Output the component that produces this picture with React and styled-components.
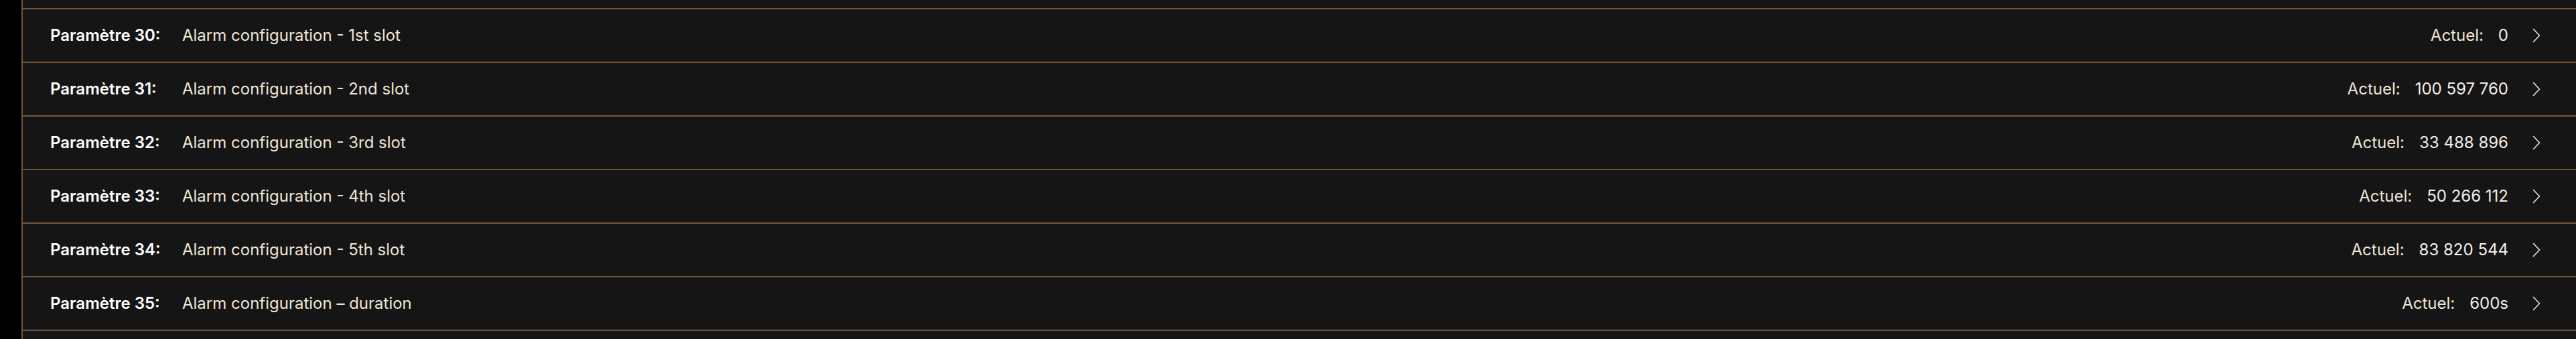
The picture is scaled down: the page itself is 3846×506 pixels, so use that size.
import React from "react"
import styled, { createGlobalStyle } from "styled-components"

const GlobalStyle = createGlobalStyle`
  html, body {
    margin: 0;
    padding: 0;
    background: #000;
    overflow: hidden;
  }
  body {
    font-family: Inter, "Noto Sans", sans-serif;
    -webkit-font-smoothing: antialiased;
  }
`

const Page = styled.div`
  display: flex;
  height: 506px;
  overflow: hidden;
  background: #000;
`

const Gutter = styled.div`
  width: 32px;
  flex-shrink: 0;
  background: #000;
`

const Panel = styled.div`
  flex: 1;
  display: flex;
  flex-direction: column;
  background: #151515;
  border-left: 2px solid #715639;
`

const Stub = styled.div`
  height: ${(p) => p.h}px;
  flex-shrink: 0;
  box-sizing: border-box;
  border-bottom: ${(p) => (p.line ? "2px solid #715639" : "none")};
`

const Row = styled.div`
  display: flex;
  align-items: center;
  height: 80px;
  flex-shrink: 0;
  box-sizing: border-box;
  padding: 0 53px 0 41px;
  border-bottom: 2px solid #715639;
  font-size: 24px;
  line-height: 1;
`

const Label = styled.span`
  width: 197px;
  flex-shrink: 0;
  color: #ffffff;
  font-weight: 600;
`

const Description = styled.span`
  flex: 1;
  color: #efe4d6;
  font-weight: 400;
`

const Current = styled.div`
  display: flex;
  align-items: center;
  color: #efe4d6;
`

const Value = styled.span`
  margin-left: 22px;
  color: #f4efe9;
`

const Chevron = styled.svg`
  margin-left: 36px;
  width: 12px;
  height: 22px;
  display: block;
`

const params = [
  { id: 30, name: "Alarm configuration - 1st slot", value: "0" },
  { id: 31, name: "Alarm configuration - 2nd slot", value: "100 597 760" },
  { id: 32, name: "Alarm configuration - 3rd slot", value: "33 488 896" },
  { id: 33, name: "Alarm configuration - 4th slot", value: "50 266 112" },
  { id: 34, name: "Alarm configuration - 5th slot", value: "83 820 544" },
  { id: 35, name: "Alarm configuration – duration", value: "600s" },
]

const App = () => {
  return (
    <Page>
      <GlobalStyle />
      <Gutter />
      <Panel>
        <Stub h={14} line />
        {params.map((p) => (
          <Row key={p.id}>
            <Label>Paramètre {p.id}:</Label>
            <Description>{p.name}</Description>
            <Current>
              <span>Actuel:</span>
              <Value>{p.value}</Value>
              <Chevron viewBox="0 0 12 22">
                <polyline
                  points="1.5,1.5 10.5,11 1.5,20.5"
                  fill="none"
                  stroke="#efe4d6"
                  strokeWidth="1.6"
                  strokeLinecap="round"
                  strokeLinejoin="round"
                />
              </Chevron>
            </Current>
          </Row>
        ))}
        <Stub h={12} />
      </Panel>
    </Page>
  )
}

export default App
